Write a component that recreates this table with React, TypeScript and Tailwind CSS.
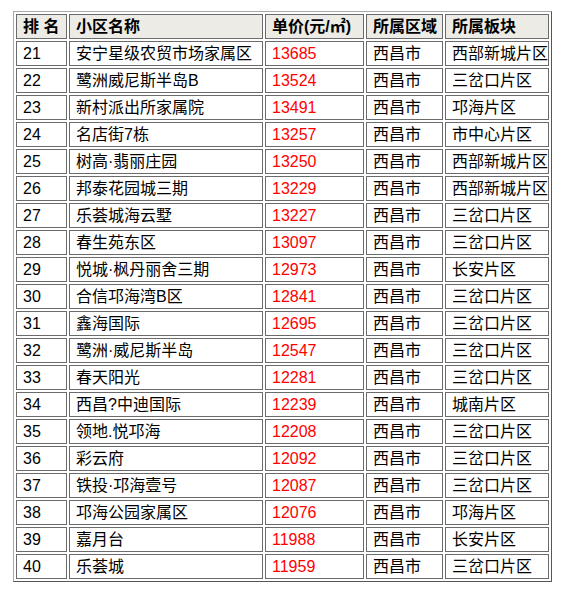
import React from 'react';

type Row = [number, string, number, string, string];

const rows: Row[] = [
    [21, '安宁星级农贸市场家属区', 13685, '西昌市', '西部新城片区'],
    [22, '鹭洲威尼斯半岛B', 13524, '西昌市', '三岔口片区'],
    [23, '新村派出所家属院', 13491, '西昌市', '邛海片区'],
    [24, '名店街7栋', 13257, '西昌市', '市中心片区'],
    [25, '树高·翡丽庄园', 13250, '西昌市', '西部新城片区'],
    [26, '邦泰花园城三期', 13229, '西昌市', '西部新城片区'],
    [27, '乐荟城海云墅', 13227, '西昌市', '三岔口片区'],
    [28, '春生苑东区', 13097, '西昌市', '三岔口片区'],
    [29, '悦城·枫丹丽舍三期', 12973, '西昌市', '长安片区'],
    [30, '合信邛海湾B区', 12841, '西昌市', '三岔口片区'],
    [31, '鑫海国际', 12695, '西昌市', '三岔口片区'],
    [32, '鹭洲·威尼斯半岛', 12547, '西昌市', '三岔口片区'],
    [33, '春天阳光', 12281, '西昌市', '三岔口片区'],
    [34, '西昌?中迪国际', 12239, '西昌市', '城南片区'],
    [35, '领地.悦邛海', 12208, '西昌市', '三岔口片区'],
    [36, '彩云府', 12092, '西昌市', '三岔口片区'],
    [37, '铁投·邛海壹号', 12087, '西昌市', '三岔口片区'],
    [38, '邛海公园家属区', 12076, '西昌市', '邛海片区'],
    [39, '嘉月台', 11988, '西昌市', '长安片区'],
    [40, '乐荟城', 11959, '西昌市', '三岔口片区'],
];

const cell = 'h-[25px] border border-[#6b6b6b] pl-[6px] pr-0 py-0 align-middle whitespace-nowrap text-left';

const App: React.FC = () => {
    return (
        <div className="w-[562px] h-[590px] bg-white pt-[11px] pl-[13px] font-['Liberation_Sans','Noto_Sans_CJK_SC',sans-serif] text-[16px] leading-[23px] text-black">
            <table className="table-fixed w-[539px] border-separate border-spacing-[2px] border border-t-[#a8a8a8] border-l-[#a8a8a8] border-r-[#555] border-b-[#555]">
                <thead>
                    <tr className="bg-[#ecebe6] font-bold">
                        <th className={`${cell} w-[51px]`}>排 名</th>
                        <th className={`${cell} w-[194px]`}>小区名称</th>
                        <th className={`${cell} w-[99px]`}>单价(元/㎡)</th>
                        <th className={`${cell} w-[77px]`}>所属区域</th>
                        <th className={`${cell} w-[104px] pl-[5px]`}>所属板块</th>
                    </tr>
                </thead>
                <tbody>
                    {rows.map((r) => (
                        <tr key={r[0]}>
                            <td className={cell}>{r[0]}</td>
                            <td className={cell}>{r[1]}</td>
                            <td className={`${cell} text-[#ff0000]`}>{r[2]}</td>
                            <td className={cell}>{r[3]}</td>
                            <td className={`${cell} pl-[5px]`}>{r[4]}</td>
                        </tr>
                    ))}
                </tbody>
            </table>
        </div>
    );
};

export default App;
